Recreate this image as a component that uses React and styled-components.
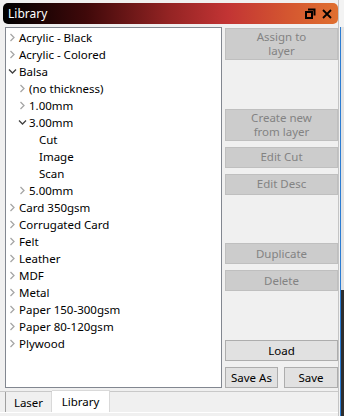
import React from 'react';
import styled, { createGlobalStyle } from 'styled-components';

const GlobalStyle = createGlobalStyle`
  html, body {
    margin: 0;
    padding: 0;
    background: #f0f0f0;
  }
  body {
    font-family: "Noto Sans", "DejaVu Sans", sans-serif;
    font-size: 11px;
  }
`;

const tree = [
  { label: 'Acrylic - Black', level: 0, state: 'closed' },
  { label: 'Acrylic - Colored', level: 0, state: 'closed' },
  { label: 'Balsa', level: 0, state: 'open' },
  { label: '(no thickness)', level: 1, state: 'closed' },
  { label: '1.00mm', level: 1, state: 'closed' },
  { label: '3.00mm', level: 1, state: 'open' },
  { label: 'Cut', level: 2 },
  { label: 'Image', level: 2 },
  { label: 'Scan', level: 2 },
  { label: '5.00mm', level: 1, state: 'closed' },
  { label: 'Card 350gsm', level: 0, state: 'closed' },
  { label: 'Corrugated Card', level: 0, state: 'closed' },
  { label: 'Felt', level: 0, state: 'closed' },
  { label: 'Leather', level: 0, state: 'closed' },
  { label: 'MDF', level: 0, state: 'closed' },
  { label: 'Metal', level: 0, state: 'closed' },
  { label: 'Paper 150-300gsm', level: 0, state: 'closed' },
  { label: 'Paper 80-120gsm', level: 0, state: 'closed' },
  { label: 'Plywood', level: 0, state: 'closed' },
];

const Chevron = ({ state }) =>
  state === 'open' ? (
    <svg width="9" height="9" viewBox="0 0 9 9">
      <path d="M1 2.5 L4.5 6 L8 2.5" fill="none" stroke="#404040" strokeWidth="1.3" />
    </svg>
  ) : (
    <svg width="9" height="9" viewBox="0 0 9 9">
      <path d="M2.5 1 L6 4.5 L2.5 8" fill="none" stroke="#a6a6a6" strokeWidth="1.3" />
    </svg>
  );

const App = () => (
  <>
    <GlobalStyle />
    <Page>
      <Window>
        <TitleBar>
          <span>Library</span>
          <TitleIcons>
            <svg width="11" height="11" viewBox="0 0 11 11">
              <path d="M3 1.5 H9.5 V7.5" fill="none" stroke="#000" strokeWidth="2" />
              <rect x="1" y="4" width="6" height="6" fill="none" stroke="#000" strokeWidth="2" />
            </svg>
            <svg width="10" height="10" viewBox="0 0 10 10">
              <path d="M1 1 L9 9 M9 1 L1 9" stroke="#000" strokeWidth="1.8" />
            </svg>
          </TitleIcons>
        </TitleBar>
        <Body>
          <Tree>
            {tree.map((item) => (
              <Row key={item.label + item.level} $level={item.level}>
                <Arrow>{item.state && <Chevron state={item.state} />}</Arrow>
                <span>{item.label}</span>
              </Row>
            ))}
          </Tree>
          <Side>
            <Button disabled $tall>
              Assign to
              <br />
              layer
            </Button>
            <Spacer />
            <Button disabled $tall>
              Create new
              <br />
              from layer
            </Button>
            <Button disabled>Edit Cut</Button>
            <Button disabled>Edit Desc</Button>
            <Spacer />
            <Button disabled>Duplicate</Button>
            <Button disabled>Delete</Button>
            <Spacer />
            <Button>Load</Button>
            <SaveRow>
              <Button>Save As</Button>
              <Button>Save</Button>
            </SaveRow>
          </Side>
        </Body>
        <TabBar>
          <Tab>Laser</Tab>
          <Tab $active>Library</Tab>
        </TabBar>
      </Window>
      <Edge>
        <EdgeLine />
      </Edge>
    </Page>
  </>
);

export default App;

const Page = styled.div`
  display: flex;
  width: 344px;
  height: 416px;
  overflow: hidden;
`;

const Window = styled.div`
  width: 339px;
  display: flex;
  flex-direction: column;
  border-right: 1px solid #c4c4c4;
  box-sizing: border-box;
`;

const TitleBar = styled.div`
  margin: 3px 0 0 3px;
  height: 21px;
  border-radius: 5px;
  padding: 0 5px 0 5px;
  display: flex;
  align-items: center;
  justify-content: space-between;
  color: #fff;
  font-size: 12px;
  background: linear-gradient(
    to right,
    #000000 0%,
    #40090a 25%,
    #952424 50%,
    #c23434 67%,
    #d45630 85%,
    #e07030 100%
  );
`;

const TitleIcons = styled.div`
  display: flex;
  align-items: center;
  gap: 6px;
  margin-right: 1px;
`;

const Body = styled.div`
  display: flex;
  gap: 3px;
  padding: 3px 0 0 5px;
  height: 361px;
`;

const Tree = styled.div`
  width: 217px;
  height: 361px;
  box-sizing: border-box;
  background: #fff;
  border: 1px solid #828790;
  padding-top: 1px;
`;

const Row = styled.div`
  display: flex;
  align-items: center;
  height: 17px;
  padding-left: ${(p) => 2 + p.$level * 10}px;
  color: #000;
  font-size: 11.5px;
  white-space: nowrap;
`;

const Arrow = styled.span`
  width: 11px;
  display: flex;
  align-items: center;
`;

const Side = styled.div`
  width: 113px;
  display: flex;
  flex-direction: column;
  gap: 6px;
  padding-top: 1px;
`;

const Spacer = styled.div`
  flex: 1;
  margin: -6px 0 0;
`;

const Button = styled.button`
  height: ${(p) => (p.$tall ? 32 : 21)}px;
  padding: 0;
  font: inherit;
  font-size: 11.5px;
  line-height: 14px;
  background: ${(p) => (p.disabled ? '#cccccc' : '#e1e1e1')};
  border: 1px solid ${(p) => (p.disabled ? '#bfbfbf' : '#adadad')};
  color: ${(p) => (p.disabled ? '#838383' : '#000')};
  box-sizing: border-box;
`;

const SaveRow = styled.div`
  display: grid;
  grid-template-columns: 53px 54px;
  justify-content: space-between;
  & > button {
    width: 100%;
  }
`;

const TabBar = styled.div`
  margin-top: 3px;
  border-top: 1px solid #c9c9c9;
  border-bottom: 1px solid #ffffff;
  display: flex;
  align-items: flex-start;
  padding-left: 5px;
  height: 20px;
  font-size: 11.5px;
`;

const Tab = styled.div`
  width: ${(p) => (p.$active ? 58 : 47)}px;
  height: ${(p) => (p.$active ? 22 : 20)}px;
  margin-top: ${(p) => (p.$active ? -2 : 0)}px;
  box-sizing: border-box;
  display: flex;
  align-items: center;
  justify-content: center;
  background: ${(p) => (p.$active ? '#fff' : '#f0f0f0')};
  border: 1px solid #d9d9d9;
  border-top: ${(p) => (p.$active ? '1px solid #d9d9d9' : 'none')};
  border-bottom: none;
  border-left: ${(p) => (p.$active ? 'none' : '1px solid #a0a0a0')};
  color: #000;
`;

const Edge = styled.div`
  flex: 1;
  padding-left: 1px;
  padding-top: 27px;
  background: #f3f3f3;
  display: flex;
`;

const EdgeLine = styled.div`
  flex: 1;
  border-left: 1px solid #2b7cd3;
  background: linear-gradient(to bottom, #e2e2e2 0 263px, #2e2e2e 263px);
`;
